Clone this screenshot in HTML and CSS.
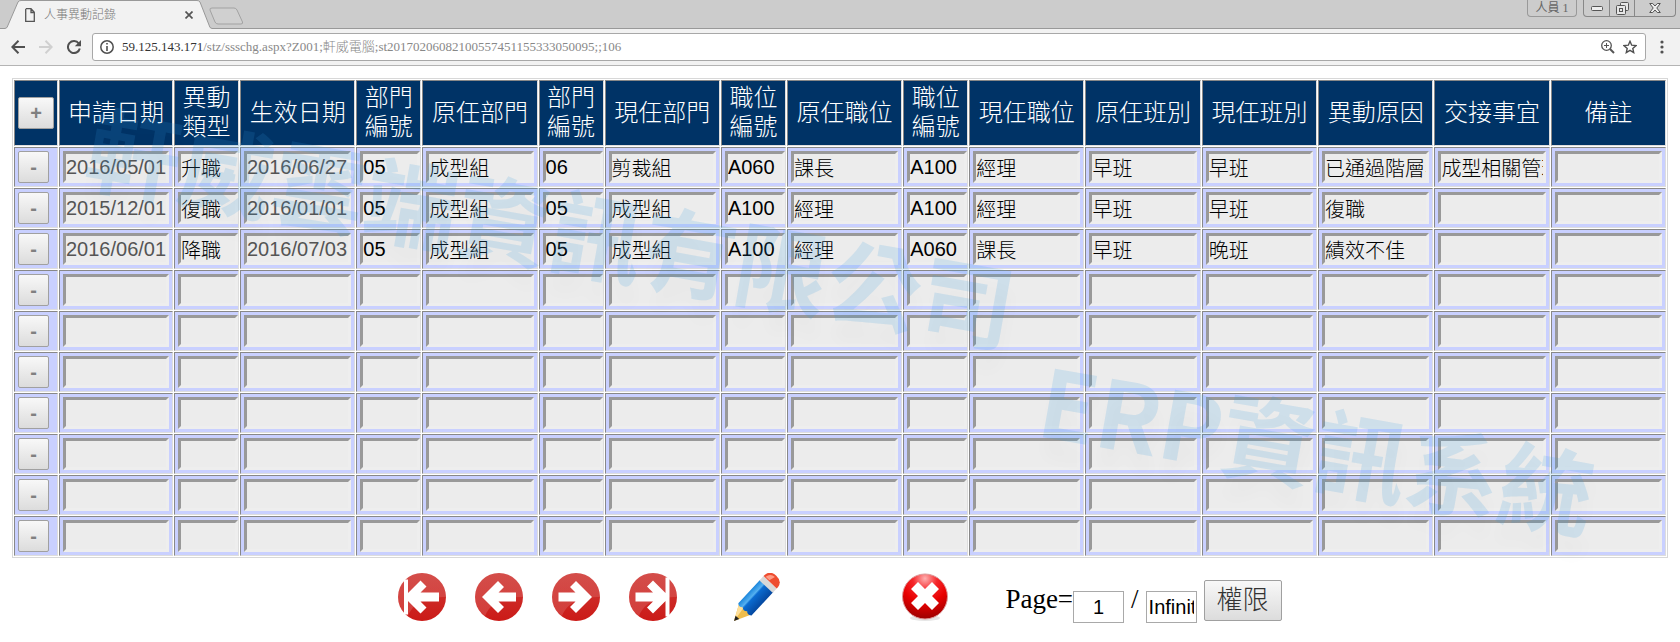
FILE: index.html
```html
<!DOCTYPE html>
<html lang="zh-Hant">
<head>
    <meta charset="UTF-8">
    <meta name="viewport" content="width=device-width, initial-scale=1.0">
    <title>人事異動記錄</title>
    <link rel="stylesheet" href="styles.css">
</head>
<body>
    <header class="browser">
        <div class="tabstrip">
            <div class="tab">
                <svg class="tab-shape" width="208" height="29" viewBox="0 0 208 29">
                    <path d="M0 28.5L2 27.500L13 2Q14 .5 16 .5H192Q194 .5 195 2L205 27.500L207 28.5V29H0Z" fill="#f2f2f2"/>
                    <path d="M0 28.5L2 27.500L13 2Q14 .5 16 .5H192Q194 .5 195 2L205 27.500L207 28.5" fill="none" stroke="#999"/>
                </svg>
                <svg class="tab-page" width="10" height="14" viewBox="0 0 10 14" fill="none" stroke="#555" stroke-width="1.3">
                    <path d="M1 .7H6L9.3 4.2V13.3H.7V.7M6 .7V4.5H9.3"/>
                </svg>
                <span class="tab-title">人事異動記錄</span>
                <button class="tab-close" aria-label="關閉分頁">
                    <svg width="8" height="8" viewBox="0 0 8 8" stroke="#555" stroke-width="1.7"><path d="M.5 .5L7.5 7.5M7.5 .5L.5 7.5"/></svg>
                </button>
            </div>
            <button class="new-tab" aria-label="新分頁">
                <svg width="35" height="18" viewBox="0 0 35 18"><path d="M3 1H25Q27 1 28 3L33.500 15Q34 17 32 17H9Q7 17 6 15L1 3Q.5 1 3 1Z" fill="#d0d0d0" stroke="#a2a2a2"/></svg>
            </button>
            <button class="person">人員 1</button>
            <div class="window-buttons">
                <button aria-label="最小化"><svg width="12" height="5" viewBox="0 0 12 5"><rect x=".5" y=".5" width="11" height="4" rx="1" fill="#eee" stroke="#555"/></svg></button>
                <button aria-label="還原"><svg width="13" height="13" viewBox="0 0 13 13" fill="#e6e6e6" stroke="#555"><rect x="4.500" y=".5" width="8" height="8" rx="1"/><rect x=".5" y="3.500" width="9" height="9" rx="1"/><rect x="3.500" y="6.500" width="3" height="3"/></svg></button>
                <button aria-label="關閉"><svg width="12" height="10" viewBox="0 0 12 10" fill="#eee" stroke="#555"><path d="M.7 .5H3.700L6 3 8.300 .5H11.300L7.800 5 11.300 9.500H8.300L6 7 3.700 9.500H.7L4.200 5Z"/></svg></button>
            </div>
        </div>
        <div class="toolbar">
            <button aria-label="上一頁"><svg width="14" height="14" viewBox="0 0 14 14" fill="none" stroke="#505050" stroke-width="2"><path d="M14 7H1.500M7.500 .8L1.300 7 7.500 13.200"/></svg></button>
            <button aria-label="下一頁"><svg width="14" height="14" viewBox="0 0 14 14" fill="none" stroke="#d0d0d0" stroke-width="2"><path d="M0 7H12.500M6.500 .8L12.700 7 6.500 13.200"/></svg></button>
            <button aria-label="重新載入"><svg width="14" height="14" viewBox="0 0 14 14"><path d="M11.800 3.500A6 6 0 1 0 12.800 8.500" fill="none" stroke="#505050" stroke-width="2"/><path d="M14 0V6.200H7.800Z" fill="#505050"/></svg></button>
            <div class="address">
                <svg width="14" height="14" viewBox="0 0 14 14"><circle cx="7" cy="7" r="6.200" fill="none" stroke="#505050" stroke-width="1.500"/><path d="M6.200 3H7.800V4.600H6.200ZM6.200 6H7.800V11H6.200Z" fill="#505050"/></svg>
                <a class="url" href="#"><span>59.125.143.171</span>/stz/ssschg.aspx?Z001;軒威電腦;st20170206082100557451155333050095;;106</a>
                <button aria-label="縮放"><svg width="14" height="14" viewBox="0 0 14 14" fill="none" stroke="#555"><circle cx="5.500" cy="5.500" r="4.800" stroke-width="1.300"/><path d="M3 5.500H8M5.500 3V8"/><path d="M9 9L13 13" stroke-width="2"/></svg></button>
                <button aria-label="加入書籤"><svg width="14" height="14" viewBox="0 0 14 14" fill="none" stroke="#505050" stroke-width="1.400"><path d="M7 1.300L8.700 5.200 13 5.600 9.800 8.400 10.700 12.600 7 10.400 3.300 12.600 4.200 8.400 1 5.600 5.300 5.200Z"/></svg></button>
            </div>
            <button aria-label="選單"><svg width="4" height="14" viewBox="0 0 4 14" fill="#505050"><circle cx="2" cy="2" r="1.600"/><circle cx="2" cy="7" r="1.600"/><circle cx="2" cy="12" r="1.600"/></svg></button>
        </div>
    </header>

    <main class="page">
        <table class="grid">
            <colgroup>
                <col class="col-btn"><col class="col-date"><col class="col-narrow"><col>
                <col class="col-narrow"><col><col class="col-narrow"><col>
                <col class="col-narrow"><col><col class="col-narrow"><col>
                <col><col><col><col><col>
            </colgroup>
            <thead>
                <tr>
                    <th class="cell-btn"><button class="btn add">+</button></th>
                    <th>申請日期</th>
                    <th>異動<br>類型</th>
                    <th>生效日期</th>
                    <th>部門<br>編號</th>
                    <th>原任部門</th>
                    <th>部門<br>編號</th>
                    <th>現任部門</th>
                    <th>職位<br>編號</th>
                    <th>原任職位</th>
                    <th>職位<br>編號</th>
                    <th>現任職位</th>
                    <th>原任班別</th>
                    <th>現任班別</th>
                    <th>異動原因</th>
                    <th>交接事宜</th>
                    <th>備註</th>
                </tr>
            </thead>
            <tbody id="rows"></tbody>
        </table>
        <div class="watermark company" aria-hidden="true">軒威雲端資訊有限公司</div>
        <div class="watermark system" aria-hidden="true">ERP資訊系統</div>

        <svg width="0" height="0" class="defs">
            <defs>
                <linearGradient id="red" x1="0" y1="0" x2="0" y2="1">
                    <stop offset="0" stop-color="#cf3a36"/><stop offset="1" stop-color="#cb1a17"/>
                </linearGradient>
                <linearGradient id="shine" x1="0" y1="0" x2="0" y2="1">
                    <stop offset="0" stop-color="#fff" stop-opacity=".1"/><stop offset="1" stop-color="#fff" stop-opacity=".14"/>
                </linearGradient>
                <radialGradient id="stop" cx=".5" cy=".1" r=".9">
                    <stop offset="0" stop-color="#ffb0b0"/><stop offset=".3" stop-color="#f5262a"/><stop offset=".6" stop-color="#e80000"/><stop offset="1" stop-color="#9c0000"/>
                </radialGradient>
                <linearGradient id="blue" x1="0" y1="0" x2="1" y2="0">
                    <stop offset="0" stop-color="#1b86dc"/><stop offset=".3" stop-color="#55b0f0"/><stop offset=".4" stop-color="#0b6bd0"/><stop offset="1" stop-color="#0548a0"/>
                </linearGradient>
                <g id="disc">
                    <circle cx="24" cy="24" r="24" fill="url(#red)"/>
                    <path d="M0 24A24 24 0 0 1 48 24C30 24 16 28 10 43A24 24 0 0 1 0 24Z" fill="url(#shine)"/>
                </g>
            </defs>
        </svg>

        <div class="pager">
            <div class="nav">
                <button aria-label="第一頁"><svg width="48" height="48" viewBox="0 0 48 48"><use href="#disc"/><path d="M6 6.500H10V20L22.500 7.500 28.500 13.500 22.500 19.500H41V28.500H22.500L28.500 34.500 22.500 40.500 10 28V41.500H6Z" fill="#fff"/></svg></button>
                <button aria-label="上一頁"><svg width="48" height="48" viewBox="0 0 48 48"><use href="#disc"/><path d="M7 24L23 8 29 14 23.500 19.500H41V28.500H23.500L29 34 23 40Z" fill="#fff"/></svg></button>
                <button aria-label="下一頁"><svg width="48" height="48" viewBox="0 0 48 48"><use href="#disc"/><path d="M40 24L24 8 18 14 23.500 19.500H6.500V28.500H23.500L18 34 24 40Z" fill="#fff"/></svg></button>
                <button aria-label="最後一頁"><svg width="48" height="48" viewBox="0 0 48 48"><use href="#disc"/><path d="M40.500 4.500V43.500H36.500V28L24 40.500 18 34.500 24 28.500H6.500V19.500H24L18 13.500 24 7.500 36.500 20V4.500Z" fill="#fff"/></svg></button>
            </div>
            <button class="edit" aria-label="修改">
                <svg width="48" height="48" viewBox="0 0 48 48">
                    <g transform="translate(1 48) rotate(43)">
                        <path d="M0 0L-8 -16H8Z" fill="#efbd4c"/>
                        <path d="M0 0L-8 -16H-2Z" fill="#ffe09a"/>
                        <path d="M0 0L-2.500 -5H2.500Z" fill="#222"/>
                        <path d="M-9 -48H9V-16Q6 -13 3 -16Q0 -13 -3 -16Q-6 -13 -9 -16Z" fill="url(#blue)"/>
                        <path d="M-9 -53H9V-47H-9Z" fill="#d8d8d8"/>
                        <path d="M-9 -53V-55Q-8 -62 0 -62Q8 -62 9 -55V-53Z" fill="#ee4d30"/>
                        <path d="M-7 -54Q-6 -60 0 -60L-2 -54Z" fill="#ff9c85"/>
                    </g>
                </svg>
            </button>
            <button class="cancel" aria-label="取消">
                <svg width="48" height="48" viewBox="0 0 48 48">
                    <ellipse cx="24" cy="45" rx="15" ry="3" fill="#e6e6e6"/>
                    <circle cx="24" cy="23.500" r="22.500" fill="url(#stop)" stroke="#d99" stroke-width="1"/>
                    <path d="M17 9L24 16 31 9 38 16 31 23 38 30 31 37 24 30 17 37 10 30 17 23 10 16Z" fill="#fff"/>
                </svg>
            </button>
            <div class="page-box">
                <label for="page">Page=</label>
                <input id="page" class="page-now" type="text" value="1">
                <span class="slash">/</span>
                <input class="page-total" type="text" value="Infinity" aria-label="總頁數" readonly>
                <button class="btn rights">權限</button>
            </div>
        </div>
    </main>

    <script>
        const names = ['申請日期', '異動類型', '生效日期', '原任部門編號', '原任部門', '現任部門編號', '現任部門',
            '原任職位編號', '原任職位', '現任職位編號', '現任職位', '原任班別', '現任班別', '異動原因', '交接事宜', '備註'];
        const narrow = [1, 3, 5, 7, 9];
        const data = [
            ['2016/05/01', '升職', '2016/06/27', '05', '成型組', '06', '剪裁組', 'A060', '課長', 'A100', '經理', '早班', '早班', '已通過階層考核', '成型相關管理', ''],
            ['2015/12/01', '復職', '2016/01/01', '05', '成型組', '05', '成型組', 'A100', '經理', 'A100', '經理', '早班', '早班', '復職', '', ''],
            ['2016/06/01', '降職', '2016/07/03', '05', '成型組', '05', '成型組', 'A100', '經理', 'A060', '課長', '早班', '晚班', '績效不佳', '', '']
        ];

        let rows = document.getElementById('rows');
        for (let i = 0; i < 10; i++) {
            let tr = document.createElement('tr');
            tr.innerHTML = '<td class="cell-btn"><button class="btn remove">-</button></td>';
            names.forEach((name, j) => {
                let td = document.createElement('td');
                let input = document.createElement('input');
                input.type = 'text';
                input.readOnly = true;
                input.setAttribute('aria-label', name + ' ' + (i + 1));
                input.value = data[i] ? data[i][j] : '';
                if (narrow.includes(j)) {
                    td.className = 'cell-narrow';
                }
                if (j === 0 || j === 2) {
                    input.className = 'date';
                }
                td.appendChild(input);
                tr.appendChild(td);
            });
            rows.appendChild(tr);
        }
    </script>
</body>
</html>
```

FILE: styles.css
```css
* {
    box-sizing: border-box;
}
body {
    margin: 0;
    background-color: #fff;
    font-family: "Liberation Serif", "Noto Sans CJK TC", serif;
}
button {
    font-family: inherit;
    cursor: pointer;
}
svg {
    display: block;
}

/* browser bar */
.browser button {
    background: none;
    border: none;
    padding: 0;
}
.tabstrip {
    display: flex;
    align-items: flex-start;
    height: 29px;
    padding: 0 4px 0 5px;
    background-color: #ccc;
    border-bottom: 1px solid #999;
}
.tab {
    position: relative;
    display: flex;
    align-items: center;
    width: 204px;
    height: 29px;
    padding: 0 16px 0 20px;
}
.tab-shape {
    position: absolute;
    left: 0;
    top: 0;
}
.tab-page, .tab-title, .tab-close {
    position: relative;
}
.tab-title {
    flex: 1;
    margin-left: 9px;
    font-size: 12px;
    line-height: 28px;
    color: #777;
    font-weight: 300;
}
.browser .new-tab {
    margin-top: 7px;
}
.browser .person {
    width: 50px;
    height: 17px;
    margin-left: auto;
    margin-right: 6px;
    border: 1px solid #999;
    border-top: none;
    border-radius: 0 0 4px 4px;
    font-size: 12px;
    line-height: 16px;
    color: #666;
}
.window-buttons {
    display: flex;
    height: 17px;
    border: 1px solid #888;
    border-top: none;
    border-radius: 0 0 4px 4px;
}
.window-buttons button {
    display: flex;
    justify-content: center;
    align-items: center;
    width: 25px;
    height: 16px;
}
.window-buttons button + button {
    border-left: 1px solid #888;
}
.window-buttons button:last-child {
    width: 41px;
}
.toolbar {
    display: flex;
    align-items: center;
    gap: 14px;
    height: 37px;
    padding: 0 16px 0 11px;
    background-color: #f2f2f2;
    border-bottom: 1px solid #b4b4b4;
}
.address {
    display: flex;
    flex: 1;
    align-items: center;
    gap: 8px;
    height: 28px;
    margin-left: -3px;
    padding: 0 8px 0 7px;
    background-color: #fff;
    border: 1px solid #a8a8a8;
    border-radius: 3px;
}
.url {
    flex: 1;
    font-size: 13px;
    font-weight: 300;
    line-height: 26px;
    color: #888;
    text-decoration: none;
    white-space: nowrap;
}
.url span {
    color: #333;
}

/* table */
.page {
    position: relative;
    padding: 12px;
}
.grid {
    width: 100%;
    table-layout: fixed;
    border: 1px solid #d8d8d8;
    border-spacing: 1px;
}
.col-btn {
    width: 44px;
}
.col-date {
    width: 114px;
}
.col-narrow {
    width: 65px;
}
.grid th, .grid td {
    padding: 3px;
    border: 1px solid;
    border-color: #888 #ddd #ddd #888;
}
.grid th {
    height: 66px;
    padding: 3px 0;
    background-color: #036;
    color: #fff;
    font-size: 24px;
    font-weight: 300;
    line-height: 29px;
}
.grid td {
    height: 40px;
    background-color: #c9d0ff;
}
.grid .cell-btn {
    padding: 3px;
    text-align: left;
}
.grid .cell-narrow {
    padding-right: 0;
}
.grid input {
    display: block;
    width: 100%;
    height: 32px;
    padding: 0;
    border: 3px solid;
    border-color: #999 #eee #eee #999;
    background-color: #ececec;
    color: #000;
    font-family: "Liberation Sans", "Noto Sans CJK TC", sans-serif;
    font-size: 20px;
    font-weight: 300;
}
.grid .date {
    color: #555;
}
.btn {
    display: block;
    padding: 0;
    border: 1px solid #a0a0a0;
    border-radius: 2px;
    background-image: linear-gradient(#f8f8f8, #dcdcdc);
}
.add, .remove {
    height: 32px;
    color: #808080;
    font-family: "Liberation Sans", sans-serif;
    font-size: 20px;
    font-weight: bold;
    line-height: 28px;
}
.add {
    width: 36px;
}
.remove {
    width: 31px;
}

/* slanted company name over the table */
.watermark {
    position: absolute;
    font-family: "Noto Sans CJK TC", sans-serif;
    font-size: 94px;
    font-weight: 700;
    line-height: 96px;
    white-space: nowrap;
    color: rgba(50, 155, 225, 0.16);
    text-shadow: 4px 20px 16px rgba(0, 0, 0, 0.02);
    transform: rotate(10deg);
    transform-origin: left top;
    pointer-events: none;
}
.company {
    left: 97px;
    top: 29px;
}
.system {
    left: 1050px;
    top: 282px;
}

/* pager */
.defs {
    position: absolute;
}
.pager {
    display: flex;
    justify-content: center;
    margin-top: 15px;
}
.nav {
    display: flex;
    gap: 29px;
}
.nav button, .edit, .cancel {
    width: 48px;
    height: 48px;
    padding: 0;
    border: none;
    background: none;
}
.edit {
    margin-left: 56px;
}
.cancel {
    margin: 0 56px 0 120px;
}
.page-box {
    display: flex;
    align-items: flex-end;
    height: 50px;
    font-size: 27px;
    line-height: 32px;
}
.page-box label, .slash {
    padding-bottom: 8px;
}
.slash {
    margin: 0 7px;
}
.page-box input {
    width: 51px;
    height: 32px;
    padding: 0 2px;
    border: 1px solid #a9a9a9;
    font-family: "Liberation Sans", sans-serif;
    font-size: 20px;
}
.page-box .page-now {
    text-align: center;
}
.rights {
    width: 78px;
    height: 41px;
    margin: 0 0 2px 7px;
    color: #333;
    font-size: 26px;
    font-weight: 300;
    line-height: 36px;
}
```
